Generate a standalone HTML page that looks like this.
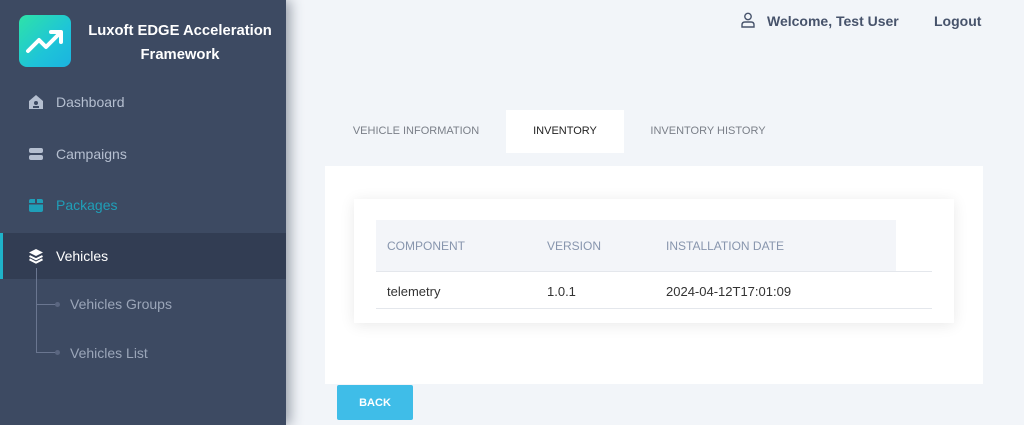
<!DOCTYPE html>
<html><head><meta charset="utf-8"><style>
*{margin:0;padding:0;box-sizing:border-box}
body{width:1024px;height:425px;overflow:hidden;background:#f2f5f9;font-family:"Liberation Sans",sans-serif;position:relative}
.side{position:absolute;left:0;top:0;width:286px;height:425px;background:#3d4a62;box-shadow:4px 0 12px rgba(40,50,70,.45)}
.logo{position:absolute;left:19px;top:15px;width:52px;height:52px;border-radius:8px;background:linear-gradient(135deg,#2ee3a8,#1ec4d8 60%,#1bb3e0)}
.title{position:absolute;left:78px;top:19px;width:204px;text-align:center;color:#fff;font-weight:bold;font-size:14.8px;line-height:24px}
.item{position:absolute;left:0;width:286px;height:46px;display:flex;align-items:center;color:#b5bfd0;font-size:14px}
.item svg{position:absolute;left:28px}
.item span{position:absolute;left:56px}
.act{background:#323d53;color:#fff;border-left:3px solid #1fb3c9}
.sub{position:absolute;left:70px;color:#9ba6b9;font-size:14px}
.dot{position:absolute;width:5px;height:5px;border-radius:50%;background:#5a6680}
.top{position:absolute;top:13px;font-size:14px;color:#47536b;font-weight:bold}
.tab{position:absolute;top:110px;height:43px;font-size:11px;line-height:43px;color:#7a7f88;text-align:center}
.card{position:absolute;left:325px;top:166px;width:658px;height:218px;background:#fff}
.inner{position:absolute;left:354px;top:199px;width:600px;height:124px;background:#fff;box-shadow:0 2px 14px rgba(0,0,0,.09)}
.th{position:absolute;top:220px;height:51px;left:376px;width:520px;background:#f3f5f9}
.h{position:absolute;top:239px;font-size:12px;color:#8795ad}
.d{position:absolute;top:284px;font-size:13px;color:#333}
</style></head><body>
<div class="side">
<div class="logo"><svg width="52" height="52" viewBox="0 0 52 52"><path d="M9 36 L20 25 L27 32 L41 18 M32 17 H42 V27" fill="none" stroke="#fff" stroke-width="4" stroke-linecap="round" stroke-linejoin="round"/></svg></div>
<div class="title">Luxoft EDGE Acceleration<br>Framework</div>
<div class="item" style="top:79px"><svg width="16" height="16" viewBox="0 0 16 16"><path d="M8 1 L15 7 V15 H1 V7Z" fill="#b5bfd0"/><circle cx="8" cy="9" r="2" fill="#3d4a62"/><rect x="5" y="12" width="6" height="2" fill="#3d4a62"/></svg><span>Dashboard</span></div>
<div class="item" style="top:131px"><svg width="16" height="16" viewBox="0 0 16 16"><rect x="1" y="2" width="14" height="5" rx="2" fill="#b5bfd0"/><rect x="1" y="9" width="14" height="5" rx="2" fill="#b5bfd0"/></svg><span>Campaigns</span></div>
<div class="item" style="top:182px;color:#1f9fb8"><svg width="16" height="16" viewBox="0 0 16 16"><rect x="1" y="2" width="14" height="13" rx="2" fill="#1f9fb8"/><rect x="1" y="6" width="14" height="1.5" fill="#3d4a62"/><rect x="7" y="1" width="2" height="5" fill="#3d4a62"/></svg><span>Packages</span></div>
<div class="item act" style="top:233px"><svg style="left:25px" width="16" height="16" viewBox="0 0 16 16"><path d="M8 1 L15 4.5 L8 8 L1 4.5Z" fill="#fff"/><path d="M1.5 8 L8 11.3 L14.5 8 M1.5 11.3 L8 14.6 L14.5 11.3" fill="none" stroke="#fff" stroke-width="2"/></svg><span style="left:53px">Vehicles</span></div>
<div style="position:absolute;left:36px;top:268px;width:1px;height:84px;background:#6a7690"></div>
<div style="position:absolute;left:36px;top:304px;width:20px;height:1px;background:#6a7690"></div>
<div style="position:absolute;left:36px;top:352px;width:20px;height:1px;background:#6a7690"></div>
<div class="dot" style="left:55px;top:302px"></div><div class="dot" style="left:55px;top:350px"></div>
<div class="sub" style="top:296px">Vehicles Groups</div>
<div class="sub" style="top:345px">Vehicles List</div>
</div>
<svg style="position:absolute;left:741px;top:12px" width="14" height="16" viewBox="0 0 14 16"><circle cx="7" cy="4.5" r="3.2" fill="none" stroke="#47536b" stroke-width="1.4"/><path d="M1 15 V13 Q1 10 4 10 H10 Q13 10 13 13 V15Z" fill="none" stroke="#47536b" stroke-width="1.4"/></svg>
<div class="top" style="left:767px">Welcome, Test User</div>
<div class="top" style="left:934px">Logout</div>
<div class="tab" style="left:340px;width:152px">VEHICLE INFORMATION</div>
<div class="tab" style="left:506px;width:118px;background:#fff;color:#222">INVENTORY</div>
<div class="tab" style="left:638px;width:140px">INVENTORY HISTORY</div>
<div class="card"></div>
<div class="inner"></div>
<div class="th"></div>
<div style="position:absolute;left:376px;top:271px;width:556px;height:1px;background:#e4e7ec"></div>
<div style="position:absolute;left:376px;top:308px;width:556px;height:1px;background:#e4e7ec"></div>
<div class="h" style="left:387px">COMPONENT</div>
<div class="h" style="left:547px">VERSION</div>
<div class="h" style="left:666px">INSTALLATION DATE</div>
<div class="d" style="left:387px">telemetry</div>
<div class="d" style="left:547px">1.0.1</div>
<div class="d" style="left:666px">2024-04-12T17:01:09</div>
<div style="position:absolute;left:337px;top:385px;width:76px;height:35px;background:#3fbde8;border-radius:2px;color:#fff;font-size:11px;font-weight:bold;text-align:center;line-height:36px">BACK</div>
</body></html>
